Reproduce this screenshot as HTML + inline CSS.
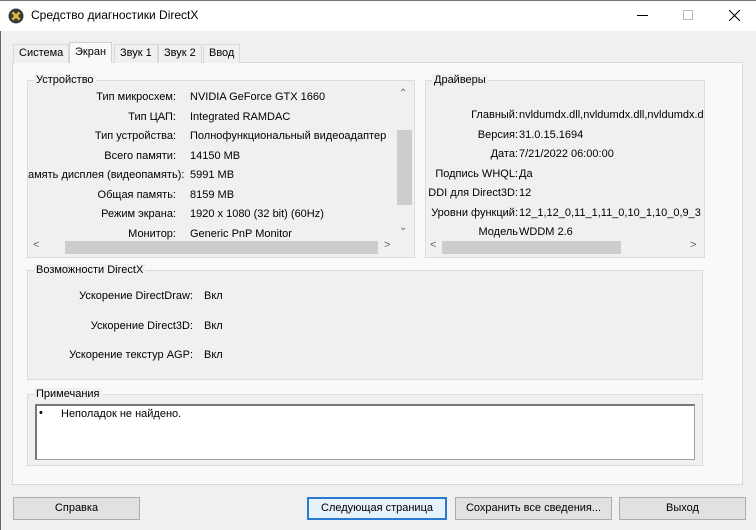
<!DOCTYPE html>
<html><head><meta charset="utf-8"><style>
*{margin:0;padding:0;box-sizing:border-box}
body{width:756px;height:530px;background:#f0f0f0;font-family:"Liberation Sans","Noto Sans CJK SC",sans-serif;font-size:11px;color:#000;position:relative;overflow:hidden}
.a{position:absolute;white-space:nowrap}
.title{left:0;top:0;width:756px;height:31px;background:#fff;border-top:1px solid #777}
.grp{position:absolute;border:1px solid #dcdcdc;background:#f0f0f0}
.lbl{position:absolute;background:#f0f0f0;padding:0 2px;top:-7px;left:6px}
.r{text-align:right}
.btn{position:absolute;top:497px;height:23px;border:1px solid #adadad;background:#e1e1e1;text-align:center;line-height:21px}
.tab{position:absolute;top:44px;height:19px;border:1px solid #d9d9d9;border-bottom:none;background:#f0f0f0;line-height:17px;padding:0 5px}
</style></head><body>
<div class="a" style="left:0;top:0;width:1px;height:530px;background:#666"></div>
<div class="a title"></div>
<svg class="a" style="left:8px;top:8px" width="16" height="16" viewBox="0 0 16 16"><circle cx="8" cy="8" r="7.5" fill="#3a3a3a"/><path d="M4.5 4.5 L11.5 11.5 M11.5 4.5 L4.5 11.5" stroke="#d8c040" stroke-width="2.6"/></svg>
<div class="a" style="left:31px;top:8px;font-size:12px">Средство диагностики DirectX</div>
<div class="a" style="left:637px;top:15px;width:11px;height:1px;background:#000"></div>
<div class="a" style="left:683px;top:10px;width:10px;height:10px;border:1px solid #bbb"></div>
<svg class="a" style="left:729px;top:10px" width="11" height="11"><path d="M0 0L11 11M11 0L0 11" stroke="#000" stroke-width="1"/></svg>

<div class="a" style="left:12px;top:62px;width:731px;height:423px;background:#f9f9f9;border:1px solid #d9d9d9"></div>
<div class="tab" style="left:13px">Система</div>
<div class="tab" style="left:69px;top:42px;height:21px;background:#f9f9f9;border-color:#d0d0d0;line-height:19px">Экран</div>
<div class="tab" style="left:114px">Звук 1</div>
<div class="tab" style="left:158px">Звук 2</div>
<div class="tab" style="left:203px">Ввод</div>

<div class="grp" style="left:27px;top:80px;width:388px;height:178px">
 <div class="lbl">Устройство</div>
</div>
<div class="a" style="left:28px;top:86px;width:368px;height:154px;overflow:hidden">
 <div class="a r" style="left:0;top:2px;width:148px;line-height:19.5px">Тип микросхем:<br>Тип ЦАП:<br>Тип устройства:<br>Всего памяти:<br>амять дисплея (видеопамять):<br>Общая память:<br>Режим экрана:<br>Монитор:</div>
 <div class="a" style="left:162px;top:2px;line-height:19.5px">NVIDIA GeForce GTX 1660<br>Integrated RAMDAC<br>Полнофункциональный видеоадаптер<br>14150 MB<br>5991 MB<br>8159 MB<br>1920 x 1080 (32 bit) (60Hz)<br>Generic PnP Monitor</div>
</div>
<div class="a" style="left:396px;top:86px;width:17px;height:154px;background:#f0f0f0"></div>
<div class="a" style="left:397px;top:130px;width:15px;height:75px;background:#cdcdcd"></div>
<div class="a" style="left:399px;top:88px;color:#666;font-size:10px">&#8963;</div>
<div class="a" style="left:399px;top:222px;color:#666;font-size:10px">&#8964;</div>
<div class="a" style="left:65px;top:241px;width:313px;height:13px;background:#cdcdcd"></div>
<div class="a" style="left:33px;top:239px;color:#666">&lt;</div>
<div class="a" style="left:384px;top:239px;color:#666">&gt;</div>

<div class="grp" style="left:425px;top:80px;width:280px;height:178px">
 <div class="lbl">Драйверы</div>
</div>
<div class="a" style="left:426px;top:86px;width:278px;height:154px;overflow:hidden">
 <div class="a r" style="left:0;top:20px;width:92px;line-height:19.5px">Главный:<br>Версия:<br>Дата:<br>Подпись WHQL:<br>DDI для Direct3D:<br>Уровни функций:<br>Модель</div>
 <div class="a" style="left:93px;top:20px;line-height:19.5px">nvldumdx.dll,nvldumdx.dll,nvldumdx.dll<br>31.0.15.1694<br>7/21/2022 06:00:00<br>Да<br>12<br>12_1,12_0,11_1,11_0,10_1,10_0,9_3<br>WDDM 2.6</div>
</div>
<div class="a" style="left:442px;top:241px;width:179px;height:13px;background:#cdcdcd"></div>
<div class="a" style="left:430px;top:239px;color:#666">&lt;</div>
<div class="a" style="left:690px;top:239px;color:#666">&gt;</div>

<div class="grp" style="left:27px;top:270px;width:676px;height:110px">
 <div class="lbl">Возможности DirectX</div>
 <div class="a r" style="left:0;top:11px;width:165px;line-height:29.5px">Ускорение DirectDraw:<br>Ускорение Direct3D:<br>Ускорение текстур AGP:</div>
 <div class="a" style="left:176px;top:11px;line-height:29.5px">Вкл<br>Вкл<br>Вкл</div>
</div>

<div class="grp" style="left:27px;top:394px;width:676px;height:72px">
 <div class="lbl">Примечания</div>
</div>
<div class="a" style="left:35px;top:404px;width:660px;height:56px;background:#fff;border:1px solid #a0a0a0;border-top:2px solid #777;border-left:2px solid #777"></div>
<div class="a" style="left:39px;top:407px">•</div>
<div class="a" style="left:61px;top:408px">Неполадок не найдено.</div>

<div class="btn" style="left:13px;width:127px">Справка</div>
<div class="btn" style="left:307px;width:140px;border:2px solid #2a7bd0;line-height:19px;background:#e5f1fb">Следующая страница</div>
<div class="btn" style="left:455px;width:157px">Сохранить все сведения...</div>
<div class="btn" style="left:619px;width:127px">Выход</div>
</body></html>
